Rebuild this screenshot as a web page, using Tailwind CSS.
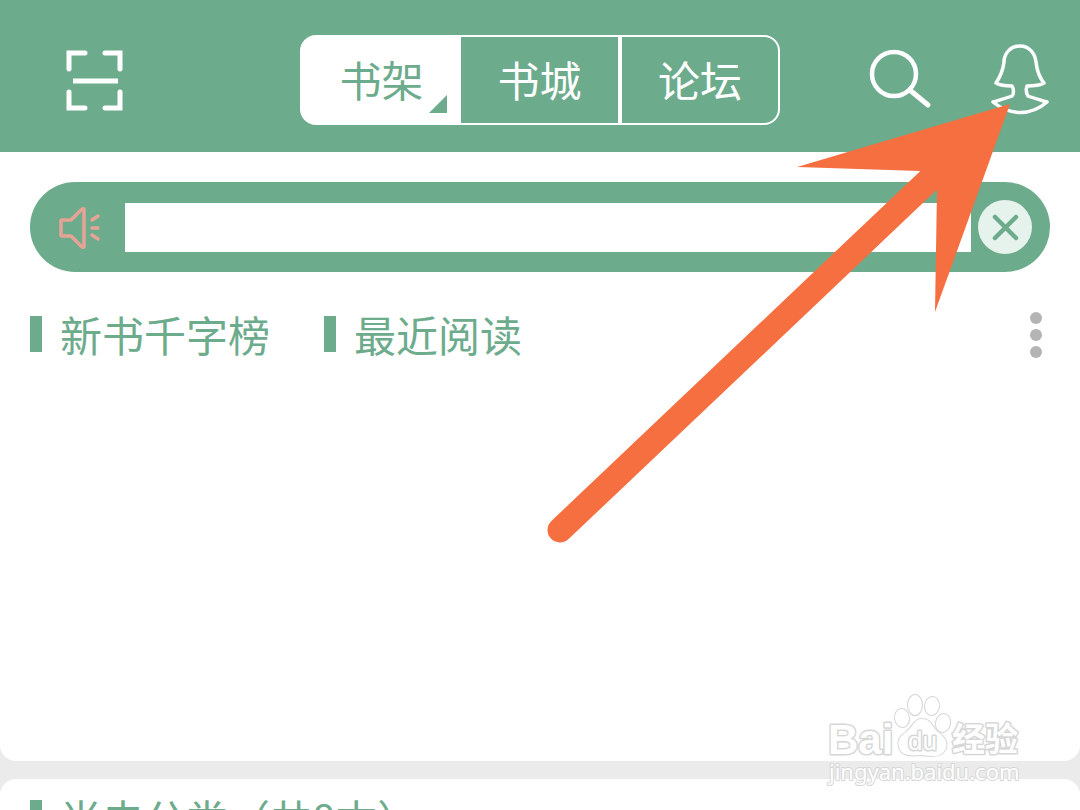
<!DOCTYPE html>
<html lang="zh-CN">
<head>
    <meta charset="UTF-8">
    <meta name="viewport" content="width=device-width, initial-scale=1.0">
    <title>书架</title>
    <script src="https://cdn.jsdelivr.net/npm/@tailwindcss/browser@4"></script>
</head>
<body class="relative h-screen overflow-hidden flex flex-col bg-[#ebebeb] text-[42px] leading-[60px] text-[#6dab8d] font-['Noto_Sans_CJK_SC',sans-serif]">
    <!-- Top bar -->
    <header class="grid grid-cols-[1fr_480px_1fr] items-center shrink-0 h-38 pt-2 px-[30px] bg-[#6dab8d] text-white">
        <div class="flex px-8">
            <button type="button" aria-label="扫一扫">
                <svg class="w-16 h-16" viewBox="0 0 64 64" fill="none" stroke="currentColor" stroke-width="5" stroke-linecap="round">
                    <path d="M23 5H7v16M43 5h15v16M23 60H7V44M43 60h15V44"/>
                    <path d="M11 33h45" stroke-linecap="butt"/>
                </svg>
            </button>
        </div>
        <nav class="grid grid-cols-[159fr_161fr_156fr] h-[90px] border-2 border-white rounded-2xl overflow-hidden bg-[linear-gradient(to_right,white_20%,transparent_20%)]">
            <button type="button" class="relative bg-white text-[#6dab8d] pb-0.5">
                书架
                <svg class="absolute right-3.5 bottom-2.5 w-[18px] h-[18px]" viewBox="0 0 18 18" fill="currentColor"><path d="M18 0v18H0z"/></svg>
            </button>
            <button type="button" class="border-r-4 border-white pb-0.5">书城</button>
            <button type="button" class="pb-0.5">论坛</button>
        </nav>
        <div class="flex justify-end items-center gap-[58px]">
            <button type="button" aria-label="搜索">
                <svg class="w-16 h-16" viewBox="0 0 64 64" fill="none" stroke="currentColor" stroke-linecap="round">
                    <circle cx="26" cy="26" r="22" stroke-width="4.5"/>
                    <path d="M43 43l17 14" stroke-width="5"/>
                </svg>
            </button>
            <button type="button" aria-label="我的">
                <svg class="w-[60px] h-[72px]" viewBox="0 0 60 72" fill="none" stroke="currentColor" stroke-width="3.5" stroke-linejoin="round">
                    <path d="M30 2C21 2 14 9 14 18C13 27 10 33 6 39C11 42 17 42 22 42C24 45 24 50 22 52C17 54 9 56 3 58C20 72 41 72 57 58C51 56 43 54 38 52C36 49 36 45 37 42C42 42 49 42 54 39C49 33 47 27 46 18C45 9 39 2 30 2z"/>
                </svg>
            </button>
        </div>
    </header>

    <main class="flex flex-col gap-[18px] grow">
        <section class="h-[609px] shrink-0 bg-white rounded-b-2xl px-[30px] pt-[30px]">
            <!-- Notice -->
            <div class="flex items-center h-[90px] rounded-full bg-[#6dab8d] pl-7 pr-[18px]">
                <svg class="w-11 h-11 shrink-0 text-[#e8a397]" viewBox="0 0 44 44" fill="none" stroke="currentColor" stroke-width="3.5" stroke-linecap="round" stroke-linejoin="round">
                    <path d="M4 15h9L24 4q2-1 2 1v36q0 2-2 1L13 31H4q-1 0-1-1V16q0-1 1-1z"/>
                    <path d="M34 15l6-4M34 23h6M34 30l6 4"/>
                </svg>
                <input type="text" aria-label="公告" class="grow min-w-0 h-[49px] ml-[23px] mr-[7px] px-3 bg-white outline-none">
                <button type="button" aria-label="关闭" class="shrink-0">
                    <svg class="w-[54px] h-[54px]" viewBox="0 0 54 54">
                        <circle cx="27" cy="27" r="27" fill="#e6f2ec"/>
                        <path d="M17 17l21 21M38 17L17 38" fill="none" stroke="currentColor" stroke-width="4.5" stroke-linecap="round" class="text-[#6dab8d]"/>
                    </svg>
                </button>
            </div>

            <div class="flex items-center justify-between mt-8">
                <div class="flex gap-[54px]">
                    <h2 class="flex items-center gap-[18px]"><span class="w-3 h-9 bg-[#6dab8d]"></span>新书千字榜</h2>
                    <h2 class="flex items-center gap-[18px]"><span class="w-3 h-9 bg-[#6dab8d]"></span>最近阅读</h2>
                </div>
                <button type="button" aria-label="更多" class="px-2">
                    <svg class="w-3 h-12" viewBox="0 0 12 48" fill="#b4b4b4">
                        <circle cx="6" cy="8" r="6"/>
                        <circle cx="6" cy="25" r="6"/>
                        <circle cx="6" cy="42" r="6"/>
                    </svg>
                </button>
            </div>
        </section>

        <section class="grow shrink-0 bg-white rounded-t-2xl px-[30px] pt-[9px]">
            <h2 class="flex items-center gap-[18px]"><span class="w-3 h-9 bg-[#6dab8d]"></span>尚未分类（共8本）</h2>
        </section>
    </main>

    <!-- Arrow to the profile button -->
    <svg class="absolute right-[60px] top-[100px] w-[480px] h-[450px] pointer-events-none" viewBox="0 0 480 450" fill="#f66f40">
        <path d="M389 80L20 430" fill="none" stroke="#f66f40" stroke-width="25" stroke-linecap="round"/>
        <path d="M470 4L257 67l123 4 17 19-2 122z"/>
    </svg>

    <!-- Watermark -->
    <svg class="absolute right-[50px] bottom-5 w-[210px] h-[100px] pointer-events-none" viewBox="0 0 210 100" fill="#fff" stroke="#d6d6d6" stroke-width="3" paint-order="stroke" stroke-linejoin="round">
        <text x="8" y="64" font-size="42" font-weight="700" font-family="Liberation Sans, sans-serif">Bai</text>
        <g stroke-width="2">
            <ellipse cx="82" cy="28" rx="7" ry="9" transform="rotate(-8 82 28)"/>
            <ellipse cx="95" cy="15" rx="7" ry="10"/>
            <ellipse cx="112" cy="16" rx="7" ry="9" transform="rotate(8 112 16)"/>
            <ellipse cx="123" cy="33" rx="7" ry="9" transform="rotate(12 123 33)"/>
            <path d="M102 29C94 29 93 37 86 42C80 46 77 51 79 57C81 66 90 66 102 65C113 67 123 67 126 58C128 50 123 46 118 42C112 37 111 29 102 29z"/>
        </g>
        <text x="88" y="60" font-size="26" font-family="Liberation Sans, sans-serif">du</text>
        <text x="132" y="61" font-size="33" font-weight="700" font-family="Noto Sans CJK SC, sans-serif">经验</text>
        <text x="9" y="90" font-size="22" stroke-width="2" font-family="Noto Sans, sans-serif">jingyan.baidu.com</text>
    </svg>
</body>
</html>
